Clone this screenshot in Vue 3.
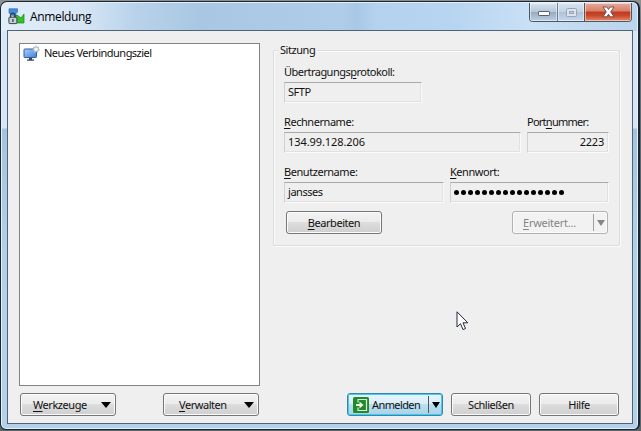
<script setup>
const dots = Array.from({ length: 16 }, (_, i) => i)
</script>

<template>
  <div class="desktop">
    <div class="window">
      <header class="titlebar">
        <svg class="appicon" width="17" height="17" viewBox="0 0 17 17">
          <path d="M1 .8H9.5V4L7.5 6L9 8L7 9L1 5Z" fill="#3f8fe0" stroke="#2b6fb8" stroke-width=".7" />
          <path d="M16 6V15H8.5V12L7 9L9 7L13 10Z" fill="#35c02c" stroke="#198419" stroke-width=".7" />
          <path d="M2.6 10V7.6Q2.6 5.2 4.8 5.2T7 7.6V10" fill="none" stroke="#3a424c" stroke-width="1.5" />
          <rect x=".9" y="9.2" width="8" height="6.4" rx=".8" fill="#c6ced6" stroke="#3a424c" />
          <path d="M4.9 11V14" stroke="#3a424c" stroke-width="1.3" />
        </svg>
        <span class="title">Anmeldung</span>
        <div class="controls">
          <span class="ctl min">
            <svg width="14" height="8"><rect x="1.5" y="1.5" width="11" height="4" rx=".6" fill="#fff" stroke="#56606f" /></svg>
          </span>
          <span class="ctl max">
            <svg width="13" height="11"><rect x="1.5" y="1.5" width="10" height="8" rx="1" fill="#dbe3ec" stroke="#98a5b4" /><rect x="4.5" y="4.5" width="4" height="2" fill="#c2cedb" stroke="#98a5b4" /></svg>
          </span>
          <span class="ctl close">
            <svg width="13" height="12" viewBox="0 0 13 12"><path d="M1 1H4.8L6.5 3.4L8.2 1H12L8.7 5.8L12 10.8H8.2L6.5 8.2L4.8 10.8H1L4.3 5.8Z" fill="#fff" stroke="#5f4a52" stroke-width=".9" /></svg>
          </span>
        </div>
      </header>

      <main class="client">
        <div class="columns">
          <div class="list">
            <div class="item">
              <svg width="17" height="17" viewBox="0 0 17 17">
                <defs>
                  <linearGradient id="scr" x1="0" y1="0" x2="1" y2="1"><stop offset="0" stop-color="#a9d2fb" /><stop offset="1" stop-color="#3f7fda" /></linearGradient>
                </defs>
                <rect x="1" y="4" width="12.5" height="8.5" rx=".8" fill="url(#scr)" stroke="#315f9e" />
                <path d="M6 13H9V14.5H11V15.8H4V14.5H6Z" fill="#30485f" />
                <path d="M13 0L14 2L16 1.5L15.5 3.5L17 5L15 6L14.8 8L13 7L11 8L10.8 6L9.2 5L10.8 3.6L10 1.6L12 2Z" fill="#aab9c9" />
                <circle cx="13" cy="4.3" r="1.8" fill="#f4f7fa" />
              </svg>
              <span class="item-text">Neues Verbindungsziel</span>
            </div>
          </div>

          <fieldset class="group">
            <span class="legend">Sitzung</span>
            <div class="row">
              <div class="field proto"><label class="l-proto">Übertragungs<u>p</u>rotokoll:</label><div class="box">SFTP</div></div>
            </div>
            <div class="row">
              <div class="field host"><label><u>R</u>echnername:</label><div class="box num">134.99.128.206</div></div>
              <div class="field port"><label class="l-port">Port<u>n</u>ummer:</label><div class="box right">2223</div></div>
            </div>
            <div class="row">
              <div class="field user"><label><u>B</u>enutzername:</label><div class="box">jansses</div></div>
              <div class="field pass"><label><u>K</u>ennwort:</label><div class="box secret"><i v-for="d in dots" :key="d"></i></div></div>
            </div>
            <div class="actions">
              <div class="btn wide"><span><u>B</u>earbeiten</span></div>
              <div class="btn wide split disabled"><span class="cap"><span class="advanced"><u>E</u>rweitert...</span></span><span class="drop"><b class="tri"></b></span></div>
            </div>
          </fieldset>
        </div>

        <footer class="footer">
          <div class="btn wide menu"><span><u>W</u>erkzeuge</span><b class="tri"></b></div>
          <div class="btn wide menu manage"><span><u>V</u>erwalten</span><b class="tri"></b></div>
          <div class="btn wide split primary">
            <span class="cap">
              <svg width="16" height="16" viewBox="0 0 16 16">
                <rect width="16" height="16" rx="1.5" fill="#238a2c" />
                <path d="M5 5.5V2.5H13.5V13.5H5V10.5" fill="none" stroke="#d9f0d5" stroke-width="1.2" />
                <path d="M3 7H6.5V4.6L10.5 8L6.5 11.4V9H3Z" fill="#e9f8e5" />
              </svg>
              <span class="login">Anmelden</span>
            </span>
            <span class="drop"><b class="tri"></b></span>
          </div>
          <div class="btn narrow"><span>Schließen</span></div>
          <div class="btn narrow"><span>Hilfe</span></div>
        </footer>
      </main>
    </div>

    <svg class="cursor" width="13" height="20" viewBox="0 0 13 20">
      <path d="M1 .8V16L4.5 12.7L7 18.6L9.5 17.5L7 11.8H11.8Z" fill="#fff" stroke="#222b36" stroke-width="1" />
    </svg>
  </div>
</template>

<style>
body { margin: 0; overflow: hidden; }
</style>

<style scoped>
* { box-sizing: border-box; }
.desktop {
  position: relative; width: 641px; height: 431px; padding: 1px 1px 1px 0;
  background: linear-gradient(#8d908f 0 3px, #6c777b 30px, #59646a 200px, #5c6568);
  font: 11px/14px "Noto Sans", sans-serif; color: #111; letter-spacing: -.45px;
}
.window {
  display: flex; flex-direction: column; width: 640px; height: 429px;
  padding: 1px 6px 5px;
  border: 1px solid #1c2733; border-right-width: 2px; border-radius: 7px 7px 6px 6px;
  background:
    linear-gradient(90deg, #e1edf9 0, #d7e6f5 80px, #b8d2ea 135px, #a9c7e2 200px, #afcde8 340px, #a9c8e5 355px, #b4d2ee 375px, #b7d5f0 450px, #c9e0f5 530px, #bad4eb) top / 100% 29px no-repeat,
    linear-gradient(#d7e6f4 0 126px, #a5c3de 127px, #b3d0e9 250px, #b5d1ea);
  box-shadow: inset 0 0 0 1px #e2f0fb;
}
.titlebar { display: flex; height: 27px; align-items: flex-start; }
.appicon { margin: 5px 5px 0 1px; }
.title { font: 12px/16px "Open Sans", sans-serif; letter-spacing: -.35px; margin-top: 6px; color: #000; }
.controls {
  display: flex; margin-left: auto; width: 103px; height: 19px;
  border: 1px solid #4b5766; border-top: 0; border-radius: 0 0 4px 4px; overflow: hidden;
}
.ctl { display: flex; align-items: center; justify-content: center; height: 18px; box-shadow: inset 0 0 0 1px rgba(255, 255, 255, .5); }
.ctl svg { display: block; }
.min { width: 28px; border-right: 1px solid #6d7c8d; background: linear-gradient(#d8e4f0, #b7c7d8 48%, #96aac0 50%, #bccfe2); }
.min svg { margin-top: 4px; }
.max { width: 27px; border-right: 1px solid #5f4f57; background: linear-gradient(#d6e3f0, #c3d3e4 48%, #afc2d6 50%, #c6d8ea); }
.close { width: 46px; background: linear-gradient(#e8aa9b, #d68069 45%, #c03920 50%, #c7482b 70%, #e68b68); }
.client {
  display: flex; flex-direction: column; width: 626px; height: 394px; padding: 12px 12px 0 11px;
  border: 1px solid #4d6479; background: #efefef;
}
.columns { display: flex; gap: 13px; height: 343px; }
.list { width: 241px; height: 343px; border: 1px solid #80848a; background: #fff; padding: 1px 3px; }
.item { display: flex; align-items: center; gap: 4px; height: 17px; }
.item svg { flex: none; }
.item-text { white-space: nowrap; letter-spacing: -.53px; margin-top: -1px; }
.group {
  display: flex; flex-direction: column; width: 347px; height: 196px; margin: 7px 0 0; padding: 0 10px;
  border: 1px solid #dadcde; border-radius: 2px;
  box-shadow: inset 1px 1px #fbfbfb, 1px 1px #fbfbfb; min-width: 0;
}
.legend { align-self: flex-start; height: 14px; margin: -8px 0 8px -6px; padding: 0 2px; background: #efefef; }
.row { display: flex; gap: 6px; height: 50px; }
.field { display: flex; flex-direction: column; }
label { height: 17px; white-space: nowrap; }
.l-proto { letter-spacing: -.52px; }
.l-port { letter-spacing: -.8px; letter-spacing: -.75px; }
u { text-decoration: underline; text-decoration-thickness: 1px; text-underline-offset: 2px; }
.box {
  display: flex; align-items: center; height: 21px; padding: 0 3px 2px; white-space: nowrap;
  border: 1px solid #fafafa; border-top-color: #a9a9a9; border-left-color: #d0d0d0; box-shadow: inset -1px -1px #e1e1e1;
}
.proto { width: 138px; }
.host { width: 237px; }
.port { width: 82px; }
.user { width: 160px; }
.pass { width: 159px; }
.num { letter-spacing: -.08px; }
.right { justify-content: flex-end; padding-right: 4px; letter-spacing: -.2px; }
.secret { padding-bottom: 0; }
.secret i { width: 5px; height: 5px; margin-right: 2px; border-radius: 50%; background: #000; }
.actions { display: flex; justify-content: space-between; margin: -4px 1px 0 2px; }
.btn {
  display: flex; align-items: center; justify-content: center; height: 23px; white-space: nowrap;
  border: 1px solid #747678; border-radius: 3px; box-shadow: inset 0 0 0 1px #fbfbfb;
  background: linear-gradient(#f3f3f3, #ebebeb 49%, #dddddd 50%, #cfcfcf);
}
.wide { width: 96px; }
.narrow { width: 80px; }
.menu { justify-content: space-between; padding: 0 4px 0 12px; }
.manage { padding-left: 15px; margin-left: 47px; }
.tri { display: block; width: 0; height: 0; border: 5px solid transparent; border-top: 6px solid #000; border-bottom: 0; }
.split { justify-content: space-between; }
.cap { display: flex; align-items: center; gap: 3px; }
.advanced { letter-spacing: -.25px; }
.login { letter-spacing: -.6px; }
.drop { display: flex; align-items: center; justify-content: center; width: 14px; height: 17px; border-left: 1px solid #555; }
.split .tri { border-width: 6px 4.5px 0; }
.disabled { background: #f2f2f2; color: #858585; border-color: #adb2b5; }
.disabled .cap { padding-left: 10px; }
.disabled .drop { border-color: #a0a0a0; }
.disabled .tri { border-top-color: #868686; }
.footer { display: flex; margin: 7px 0 0 1px; }
.primary {
  margin-left: 88px; padding-left: 5px; border-color: #3986a9; box-shadow: inset 0 0 0 1px #42c9f3;
  background: linear-gradient(#e8f5fb, #d8edf8 49%, #bddff0 50%, #a6d3e9);
}
.narrow { margin-left: 8px; }
.cursor { position: absolute; left: 456px; top: 311px; }
</style>
